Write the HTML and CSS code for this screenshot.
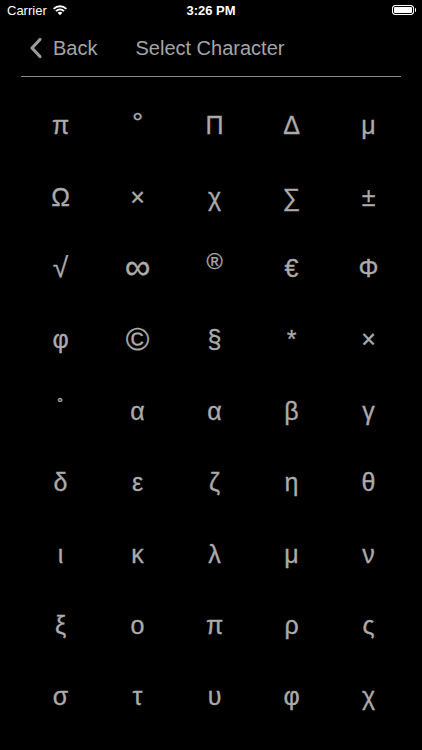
FILE: index.html
```
<!DOCTYPE html>
<html>
<head>
<meta charset="utf-8">
<link rel="stylesheet" href="styles.css">
</head>
<body>
<div class="status">
  <div class="carrier">Carrier
    <svg class="wifi" width="16" height="12" viewBox="0 0 16 12"><path d="M1 4.2a10 10 0 0 1 14 0l-1.3 1.3a8.2 8.2 0 0 0-11.4 0z M3.3 6.5a6.8 6.8 0 0 1 9.4 0l-1.3 1.3a5 5 0 0 0-6.8 0z M5.6 8.8a3.5 3.5 0 0 1 4.8 0L8 11.2z" fill="#fff"/></svg>
  </div>
  <div class="time">3:26 PM</div>
  <div class="battery"><span class="cell"></span><span class="nub"></span></div>
</div>
<div class="nav">
  <div class="back">
    <svg width="14" height="22" viewBox="0 0 14 22"><path d="M11 2.5L3 11l8 8.5" fill="none" stroke="#9a9a9a" stroke-width="3.2" stroke-linecap="round" stroke-linejoin="round"/></svg>
    <span>Back</span>
  </div>
  <div class="title">Select Character</div>
</div>
<div class="rule"></div>
<div class="grid">
  <div class="c">π</div><div class="c deg">°</div><div class="c">Π</div><div class="c">Δ</div><div class="c">μ</div>
  <div class="c">Ω</div><div class="c">×</div><div class="c">χ</div><div class="c">∑</div><div class="c">±</div>
  <div class="c sqrt">√</div><div class="c inf">∞</div><div class="c reg">®</div><div class="c">€</div><div class="c">Φ</div>
  <div class="c">φ</div><div class="c copy">©</div><div class="c">§</div><div class="c">*</div><div class="c">×</div>
  <div class="c ring">˚</div><div class="c">α</div><div class="c">α</div><div class="c">β</div><div class="c">γ</div>
  <div class="c">δ</div><div class="c">ε</div><div class="c">ζ</div><div class="c">η</div><div class="c">θ</div>
  <div class="c">ι</div><div class="c">κ</div><div class="c">λ</div><div class="c">μ</div><div class="c">ν</div>
  <div class="c">ξ</div><div class="c">ο</div><div class="c">π</div><div class="c">ρ</div><div class="c">ς</div>
  <div class="c">σ</div><div class="c">τ</div><div class="c">υ</div><div class="c">φ</div><div class="c">χ</div>
</div>
</body>
</html>
```
FILE: styles.css
```
html, body {
  margin: 0;
  padding: 0;
  background: #000;
  width: 422px;
  height: 750px;
  overflow: hidden;
  font-family: "Liberation Sans", Arial, sans-serif;
}
.status {
  height: 20px;
  display: flex;
  align-items: center;
  justify-content: space-between;
  padding: 0 6px 0 7px;
  color: #fff;
  font-size: 13px;
  position: relative;
}
.carrier {
  display: flex;
  align-items: center;
  gap: 5px;
}
.time {
  position: absolute;
  left: 0;
  right: 0;
  text-align: center;
  font-weight: bold;
  font-size: 13px;
}
.battery {
  display: flex;
  align-items: center;
}
.cell {
  width: 20px;
  height: 8px;
  border: 1px solid #fff;
  border-radius: 3px;
  background: #fff;
  box-shadow: inset 0 0 0 1px #000;
}
.nub {
  width: 1.5px;
  height: 4px;
  background: #fff;
  margin-left: 1px;
  border-radius: 0 1px 1px 0;
}
.nav {
  height: 56px;
  display: flex;
  align-items: center;
  padding-left: 29px;
  color: #a5a5a5;
  font-size: 20px;
}
.back {
  display: flex;
  align-items: center;
  gap: 10px;
}
.back svg {
  display: block;
}
.title {
  margin-left: 38px;
}
.rule {
  height: 1px;
  margin: 0 21px;
  background: #8c8c8c;
}
.grid {
  display: grid;
  grid-template-columns: repeat(5, 77px);
  grid-auto-rows: 71.4px;
  margin: 13px 0 0 22px;
  color: #ababab;
  font-size: 25px;
  -webkit-text-stroke: 0.3px #ababab;
}
.c {
  display: flex;
  align-items: center;
  justify-content: center;
}
.deg {
  font-size: 28px;
  padding-bottom: 6px;
}
.reg {
  font-size: 22px;
  padding-bottom: 12px;
}
.ring {
  font-size: 18px;
  padding-bottom: 8px;
}
.inf {
  font-size: 36px;
  padding-bottom: 3px;
}
.copy {
  font-size: 32px;
}
.sqrt {
  font-size: 28px;
}
```
